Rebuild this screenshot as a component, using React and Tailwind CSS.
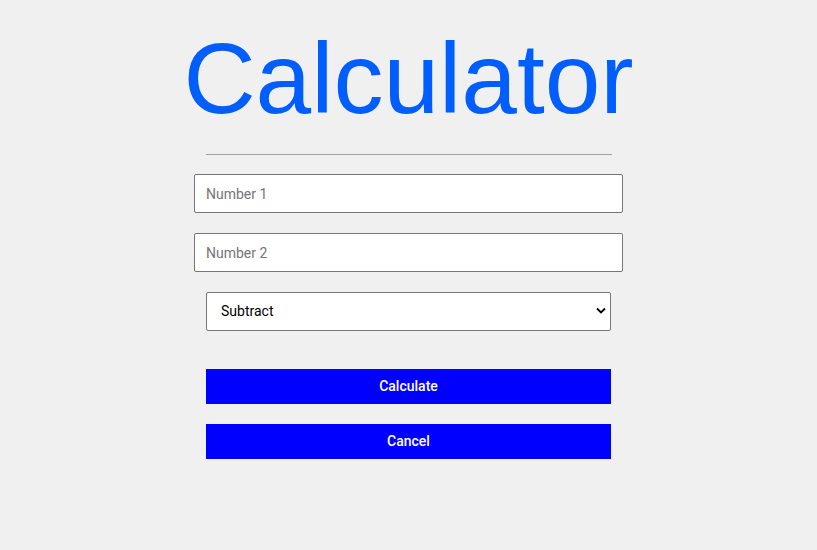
import { useState } from "react";

export default function App() {
  const [a, setA] = useState("");
  const [b, setB] = useState("");
  const [op, setOp] = useState("subtract");

  return (
    <div className="min-h-[550px] bg-[#f0f0f0] flex flex-col items-center pt-[21px]" style={{ fontFamily: "Roboto, 'Liberation Sans', sans-serif" }}>
      <h1 className="text-[100px] leading-[115px] text-[#005eff] font-normal" style={{ fontFamily: "'Liberation Sans', Arial, sans-serif" }}>
        Calculator
      </h1>
      <hr className="w-[406px] mt-[18px] border-0 border-t border-[#a0a0a0]" />

      <input
        className="mt-[19px] w-[429px] h-[39px] bg-white border border-[#767676] rounded-[2px] px-[11px] text-[14px] text-black placeholder:text-[#757575] outline-none"
        placeholder="Number 1"
        value={a}
        onChange={(e) => setA(e.target.value)}
      />
      <input
        className="mt-[20px] w-[429px] h-[39px] bg-white border border-[#767676] rounded-[2px] px-[11px] text-[14px] text-black placeholder:text-[#757575] outline-none"
        placeholder="Number 2"
        value={b}
        onChange={(e) => setB(e.target.value)}
      />

      <div className="relative mt-[20px] w-[405px] h-[39px]">
        <select
          className="appearance-none w-full h-full bg-white border border-[#767676] rounded-[2px] pl-[14px] text-[14px] text-black outline-none"
          value={op}
          onChange={(e) => setOp(e.target.value)}
        >
          <option value="add">Add</option>
          <option value="subtract">Subtract</option>
          <option value="multiply">Multiply</option>
          <option value="divide">Divide</option>
        </select>
        <svg className="absolute right-[5px] top-[15px] pointer-events-none" width="10" height="7" viewBox="0 0 10 7">
          <path d="M1 1.5 L5 5.5 L9 1.5" fill="none" stroke="#000" strokeWidth="1.8" />
        </svg>
      </div>

      <button className="mt-[38px] w-[405px] h-[35px] bg-[#0000ff] text-white text-[14px] font-medium">
        Calculate
      </button>
      <button className="mt-[20px] w-[405px] h-[35px] bg-[#0000ff] text-white text-[14px] font-medium">
        Cancel
      </button>
    </div>
  );
}
